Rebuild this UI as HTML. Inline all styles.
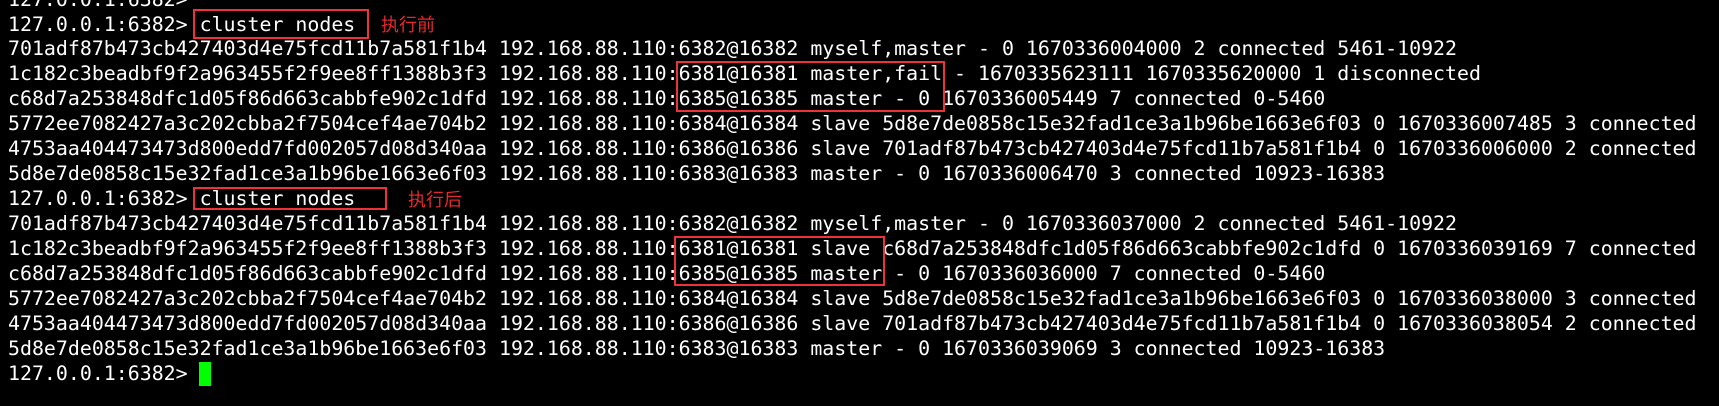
<!DOCTYPE html>
<html><head><meta charset="utf-8"><style>
html,body{margin:0;padding:0;background:#000;width:1719px;height:406px;overflow:hidden;position:relative}
pre{position:absolute;left:8px;top:-12.4px;margin:0;font-family:"DejaVu Sans Mono","Liberation Mono",monospace;font-size:19.9px;line-height:24.93px;color:#fff}
.b{position:absolute;border:2px solid #ee3338;box-sizing:border-box}
.t{position:absolute;color:#e8282d;font-family:"Noto Sans CJK SC","WenQuanYi Zen Hei",sans-serif;font-size:18px;line-height:20px}
.cur{position:absolute;left:199px;top:362px;width:12px;height:24px;background:#00ff00}
</style></head><body>
<pre>127.0.0.1:6382>
127.0.0.1:6382> cluster nodes
701adf87b473cb427403d4e75fcd11b7a581f1b4 192.168.88.110:6382@16382 myself,master - 0 1670336004000 2 connected 5461-10922
1c182c3beadbf9f2a963455f2f9ee8ff1388b3f3 192.168.88.110:6381@16381 master,fail - 1670335623111 1670335620000 1 disconnected
c68d7a253848dfc1d05f86d663cabbfe902c1dfd 192.168.88.110:6385@16385 master - 0 1670336005449 7 connected 0-5460
5772ee7082427a3c202cbba2f7504cef4ae704b2 192.168.88.110:6384@16384 slave 5d8e7de0858c15e32fad1ce3a1b96be1663e6f03 0 1670336007485 3 connected
4753aa404473473d800edd7fd002057d08d340aa 192.168.88.110:6386@16386 slave 701adf87b473cb427403d4e75fcd11b7a581f1b4 0 1670336006000 2 connected
5d8e7de0858c15e32fad1ce3a1b96be1663e6f03 192.168.88.110:6383@16383 master - 0 1670336006470 3 connected 10923-16383
127.0.0.1:6382> cluster nodes
701adf87b473cb427403d4e75fcd11b7a581f1b4 192.168.88.110:6382@16382 myself,master - 0 1670336037000 2 connected 5461-10922
1c182c3beadbf9f2a963455f2f9ee8ff1388b3f3 192.168.88.110:6381@16381 slave c68d7a253848dfc1d05f86d663cabbfe902c1dfd 0 1670336039169 7 connected
c68d7a253848dfc1d05f86d663cabbfe902c1dfd 192.168.88.110:6385@16385 master - 0 1670336036000 7 connected 0-5460
5772ee7082427a3c202cbba2f7504cef4ae704b2 192.168.88.110:6384@16384 slave 5d8e7de0858c15e32fad1ce3a1b96be1663e6f03 0 1670336038000 3 connected
4753aa404473473d800edd7fd002057d08d340aa 192.168.88.110:6386@16386 slave 701adf87b473cb427403d4e75fcd11b7a581f1b4 0 1670336038054 2 connected
5d8e7de0858c15e32fad1ce3a1b96be1663e6f03 192.168.88.110:6383@16383 master - 0 1670336039069 3 connected 10923-16383
127.0.0.1:6382> </pre>
<div class="b" style="left:193px;top:9px;width:176px;height:30px"></div>
<div class="t" style="left:381px;top:14px">执行前</div>
<div class="b" style="left:676px;top:61px;width:269px;height:51px"></div>
<div class="b" style="left:193px;top:187px;width:194px;height:23px"></div>
<div class="t" style="left:408px;top:189px">执行后</div>
<div class="b" style="left:674px;top:236px;width:211px;height:50px"></div>
<div class="cur"></div>
</body></html>
